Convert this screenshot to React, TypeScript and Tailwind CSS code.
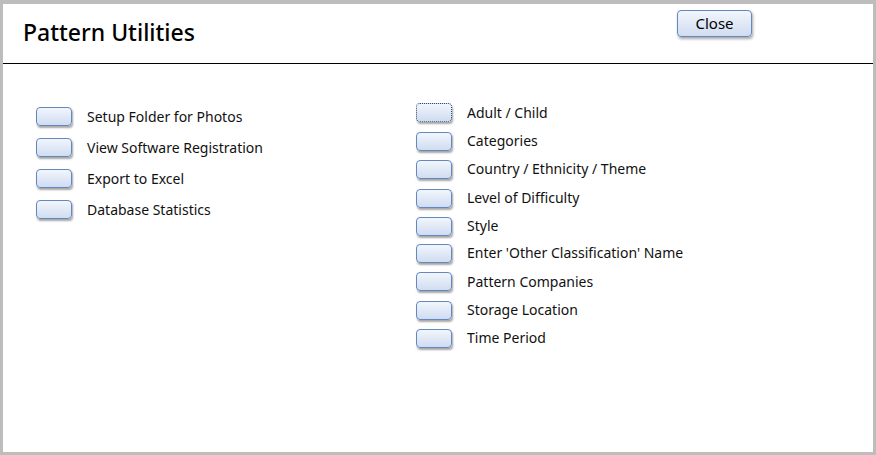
import React from 'react';

const leftItems = [
  'Setup Folder for Photos',
  'View Software Registration',
  'Export to Excel',
  'Database Statistics',
];

const rightItems: { label: string; h: string; focus?: boolean }[] = [
  { label: 'Adult / Child', h: 'h-[29px]', focus: true },
  { label: 'Categories', h: 'h-[28px]' },
  { label: 'Country / Ethnicity / Theme', h: 'h-[28px]' },
  { label: 'Level of Difficulty', h: 'h-[30px]' },
  { label: 'Style', h: 'h-[26px]' },
  { label: "Enter 'Other Classification' Name", h: 'h-[28px]' },
  { label: 'Pattern Companies', h: 'h-[29px]' },
  { label: 'Storage Location', h: 'h-[28px]' },
  { label: 'Time Period', h: 'h-[28px]' },
];

function FormButton({ focus = false }: { focus?: boolean }) {
  return (
    <div
      className={`w-[36px] h-[19px] shrink-0 rounded-[4px] border bg-gradient-to-b from-[#f2f6fc] to-[#d0dcf1] shadow-[1px_2px_2px_rgba(0,0,0,0.35)] ${
        focus ? 'border-dotted border-[#2c4a78]' : 'border-[#6488bd]'
      }`}
    />
  );
}

function Row({ label, h, focus }: { label: string; h: string; focus?: boolean }) {
  return (
    <div className={`flex items-center ${h}`}>
      <FormButton focus={focus} />
      <span className="ml-[15px] text-[14px] text-[#111] leading-none">{label}</span>
    </div>
  );
}

export default function App() {
  return (
    <div
      className="w-[876px] h-[455px] bg-[#bdbdbd] pt-[4px] pl-[3px] pr-[3px] pb-[3px]"
      style={{ fontFamily: '"Noto Sans", "Open Sans", sans-serif' }}
    >
      <div className="w-full h-full bg-white flex flex-col">
        {/* header */}
        <div className="h-[60px] border-b border-black flex items-start justify-between">
          <h1 className="mt-[17px] ml-[20px] text-[23px] font-medium text-black leading-none">
            Pattern Utilities
          </h1>
          <button className="mt-[6px] mr-[121px] w-[75px] h-[27px] rounded-[4px] border border-[#6488bd] bg-gradient-to-b from-[#f2f6fc] to-[#d0dcf1] shadow-[1px_2px_3px_rgba(0,0,0,0.35)] text-[15px] text-black leading-none">
            Close
          </button>
        </div>

        {/* body */}
        <div className="flex pt-[34px]">
          <div className="ml-[33px] w-[380px] flex flex-col pt-[3px]">
            {leftItems.map((l) => (
              <Row key={l} label={l} h="h-[31px]" />
            ))}
          </div>
          <div className="flex flex-col">
            {rightItems.map((r) => (
              <Row key={r.label} {...r} />
            ))}
          </div>
        </div>
      </div>
    </div>
  );
}
